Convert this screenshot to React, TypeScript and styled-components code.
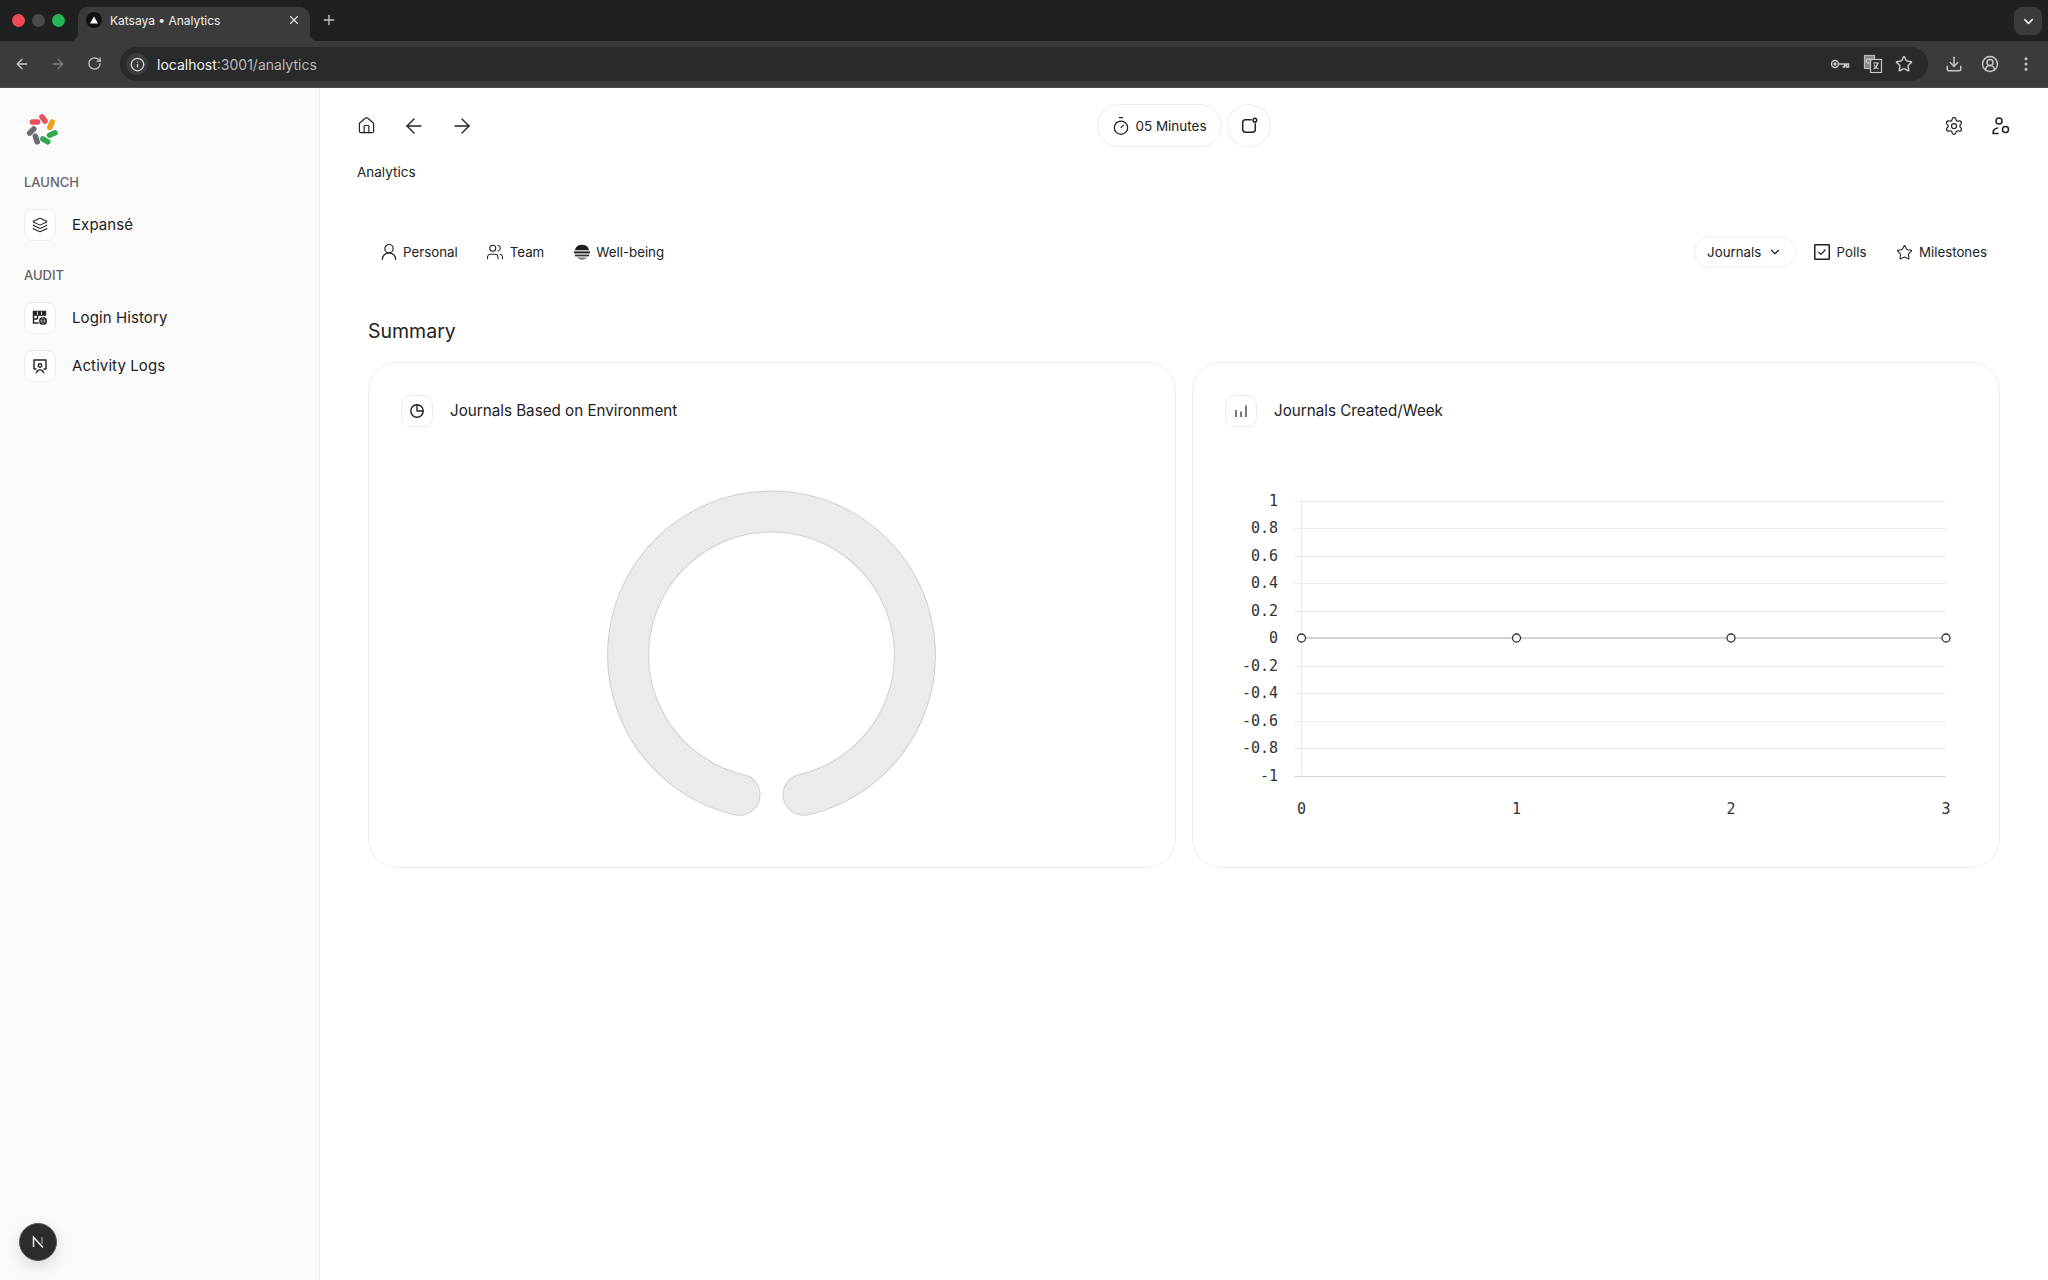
import React from "react";
import styled, { createGlobalStyle } from "styled-components";
import { ArrowLeft, ArrowRight, ChevronDown, House, Layers, Plus, RotateCw, Settings, Star, Timer, X, MoreVertical, Download, CircleUserRound, Info, Users, UserRound } from "lucide-react";

const Global = createGlobalStyle`
  html, body { margin: 0; padding: 0; background: #fff; overflow: hidden; }
  body { font-family: Inter, "Liberation Sans", sans-serif; color: #222; }
  * { box-sizing: border-box; }
`;

const Page = styled.div`display: flex; flex-direction: column; width: 2048px; height: 1280px; overflow: hidden;`;

const TabStrip = styled.div`display: flex; align-items: flex-end; height: 41px; background: #1f2120; padding-left: 12px;`;
const Lights = styled.div`display: flex; gap: 7px; align-self: flex-start; margin-top: 14px; width: 66px;`;
const Light = styled.span<{ $c: string }>`width: 13px; height: 13px; border-radius: 50%; background: ${p => p.$c};`;
const Tab = styled.div`
  position: relative; display: flex; align-items: center; width: 232px; height: 34px; padding: 0 9px 8px 8px;
  background: #3b3b3b; border-radius: 10px 10px 0 0; color: #f0f0f0; font-size: 12px;
  &::before, &::after { content: ""; position: absolute; bottom: 0; width: 8px; height: 8px; }
  &::before { left: -8px; background: radial-gradient(circle at 0 0, transparent 8px, #3b3b3b 8.5px); }
  &::after { right: -8px; background: radial-gradient(circle at 100% 0, transparent 8px, #3b3b3b 8.5px); }
`;
const Favicon = styled.span`
  display: flex; align-items: center; justify-content: center; width: 16px; height: 16px; border-radius: 50%;
  background: #111; margin-right: 8px;
`;
const TabTitle = styled.span`flex: 1;`;
const NewTab = styled.div`display: flex; align-self: flex-start; margin: 12px 0 0 11px; color: #c4c4c4;`;
const StripEnd = styled.div`
  margin-left: auto; margin-right: 6px; align-self: flex-start; margin-top: 7px; width: 28px; height: 28px; border-radius: 8px;
  background: #3b3b3b; display: flex; align-items: center; justify-content: center; color: #eee;
`;
const Toolbar = styled.div`display: flex; align-items: center; height: 47px; background: #3b3b3b; color: #c7c7c7; border-bottom: 1px solid #4a4a4a;`;
const NavIcon = styled.span<{ $dim?: boolean }>`display: flex; width: 36px; justify-content: center; color: ${p => (p.$dim ? "#7f7f7f" : "#c7c7c7")};`;
const NavGroup = styled.div`display: flex; padding-left: 4px; width: 120px;`;
const Omnibox = styled.div`
  display: flex; align-items: center; width: 1808px; height: 34px; border-radius: 17px; background: #292a2a; padding: 0 15px 0 6px;
  font-size: 14px; color: #b9b9b9;
`;
const InfoChip = styled.span`display: flex; align-items: center; justify-content: center; width: 22px; height: 22px; border-radius: 50%; background: #3b3b3b; margin-right: 9px; color: #ddd;`;
const Host = styled.span`color: #f2f2f2;`;
const OmniIcons = styled.div`margin-left: auto; display: flex; gap: 12.5px; color: #c7c7c7; align-items: center;`;
const TrailIcons = styled.div`display: flex; align-items: center; gap: 18px; margin-left: 17px; color: #c7c7c7;`;

const Body = styled.div`flex: 1; display: flex; min-height: 0;`;
const Sidebar = styled.aside`
  position: relative; width: 320px; background: #fafafa; border-right: 1px solid #ececec; padding: 24px 24px 0;
`;
const Logo = styled.div`display: flex; height: 34px; margin-left: 2px; margin-bottom: 26px;`;
const SectionLabel = styled.div`font-size: 13px; line-height: 20px; font-weight: 500; color: #666; margin-bottom: 17px;`;
const NavRow = styled.div`display: flex; align-items: center; gap: 16px; height: 31px; font-size: 15px; letter-spacing: .1px; color: #222; margin-bottom: 17px;`;
const NavBox = styled.span`
  display: flex; align-items: center; justify-content: center; width: 32px; height: 32px; border: 1px solid #ededed; border-radius: 9px; background: #fff; color: #222;
`;
const SectionGap = styled.div`height: 8px;`;
const DevBadge = styled.div`
  position: absolute; left: 19px; bottom: 19px; width: 38px; height: 38px; border-radius: 50%; background: #2c2c2c; border: 1px solid #555;
  display: flex; align-items: center; justify-content: center; box-shadow: 0 6px 16px rgba(0,0,0,.12);
`;

const Main = styled.main`flex: 1; padding: 16px 48px 0 48px; min-width: 0;`;
const Header = styled.div`display: grid; grid-template-columns: 1fr auto 1fr; align-items: center; height: 43px; margin: 0 -17px 0 -18px;`;
const IconGroup = styled.div<{ $end?: boolean }>`display: flex; gap: ${p => (p.$end ? "15px" : "16px")}; justify-content: ${p => (p.$end ? "flex-end" : "flex-start")};`;
const IconBtn = styled.span`display: flex; align-items: center; justify-content: center; width: 32px; height: 32px; color: #222;`;
const CenterGroup = styled.div`display: flex; gap: 5px;`;
const TimerPill = styled.div`
  display: flex; align-items: center; gap: 4px; height: 43px; width: 125px; justify-content: center; border: 1px solid #ececec; border-radius: 22px; font-size: 13.5px; color: #222;
`;
const RoundBtn = styled.div`display: flex; align-items: center; justify-content: center; width: 44px; height: 43px; border: 1px solid #ececec; border-radius: 50%; color: #222;`;
const Crumb = styled.div`font-size: 13.5px; line-height: 20px; color: #222; margin: 15px 0 54px -11px;`;
const TabsRow = styled.div`display: flex; justify-content: space-between; align-items: center; height: 32px; padding-right: 1px;`;
const TabGroup = styled.div<{ $gap: number }>`display: flex; align-items: center; gap: ${p => p.$gap}px;`;
const ViewTab = styled.div`display: flex; align-items: center; gap: 6px; padding: 0 12px; font-size: 13.3px; color: #222; height: 32px;`;
const IconSlot = styled.span`display: flex; justify-content: center; align-items: center; width: 17px; flex-shrink: 0; & > svg { flex-shrink: 0; }`;
const Select = styled.div`display: flex; align-items: center; gap: 7px; height: 32px; width: 103px; padding: 0 12px; margin-right: -1px; border: 1px solid #efefef; border-radius: 16px; font-size: 13.3px; color: #222; white-space: nowrap; & > svg { flex-shrink: 0; }`;
const SummaryTitle = styled.h2`font-size: 19.5px; line-height: 28px; font-weight: 400; color: #222; margin: 49px 0 17px;`;
const Cards = styled.div`display: grid; grid-template-columns: 1fr 1fr; gap: 16px;`;
const Card = styled.section`height: 506px; border: 1px solid #ececec; border-radius: 30px; padding: 32px; background: #fff;`;
const CardHead = styled.div`display: flex; align-items: center; gap: 17px; height: 31px; font-size: 15.2px; color: #222; margin-bottom: 59px;`;
const ChartBox = styled.div`display: flex; justify-content: center;`;

const s = { strokeLinecap: "round" as const, strokeLinejoin: "round" as const };

function LogoMark() {
  const bars: [number, number, number, number, string][] = [
    [6.5, 10, 11.5, 10, "#e8505b"], [16, 5, 19, 9, "#e8505b"], [26.2, 10, 23.8, 15.4, "#f59c1a"],
    [29, 20.8, 23.6, 23.2, "#2fa84f"], [16.8, 26.8, 21.8, 29.8, "#2fa84f"], [9.4, 24.2, 11.2, 29.8, "#6b6b70"], [7.8, 16.9, 3.6, 21.1, "#6b6b70"],
  ];
  return (
    <svg width="34" height="34" viewBox="0 0 34 34">
      {bars.map((b, i) => <line key={i} x1={b[0]} y1={b[1]} x2={b[2]} y2={b[3]} stroke={b[4]} strokeWidth="5.5" strokeLinecap="round" />)}
    </svg>
  );
}

const KeyIcon = () => (
  <svg width="20" height="20" viewBox="0 0 20 20" fill="none" stroke="currentColor" strokeWidth="1.5"><circle cx="5" cy="10" r="3.5" /><circle cx="5" cy="10" r="1" fill="currentColor" /><path d="M8.500 10h10v3h-2v-1.500h-2V13h-2" /></svg>
);
const TranslateIcon = () => (
  <svg width="20" height="20" viewBox="0 0 20 20" fill="none" stroke="currentColor" strokeWidth="1.2"><rect x="1.5" y="1.5" width="10" height="13" fill="#888" stroke="#bbb" /><rect x="7.5" y="5.5" width="11" height="13" fill="#292a2a" /><path d="M10 9h6M13 8v1M15 9c-.8 3-2.4 5-4.5 6M11 10.5c.8 2 2.5 3.6 4.5 4.5" /><circle cx="5.5" cy="7" r="2.2" /></svg>
);
const TableGlobeIcon = () => (
  <svg width="16" height="16" viewBox="0 0 16 16" fill="none"><path d="M1.5 1.5h12v3.5h-12zM1.5 5v8h5M5.5 1.5V9M9.5 1.5V6M1.5 9h4" stroke="#222" strokeWidth="1.4" /><path d="M1.5 1.5h12v3.5h-12z" fill="#222" /><path d="M5.5 1.5v3.5M9.5 1.5v3.5" stroke="#fff" strokeWidth=".8" /><circle cx="11" cy="11" r="4" fill="#222" /><path d="M7.5 11h7M11 7.5c-2 2-2 5 0 7M11 7.5c2 2 2 5 0 7" stroke="#fff" strokeWidth=".5" /></svg>
);
const PresenterIcon = () => (
  <svg width="16" height="16" viewBox="0 0 16 16" fill="none" stroke="#222" strokeWidth="1.4" {...s}><path d="M4 11H2V2h12v9h-2" /><circle cx="8" cy="7.5" r="1.7" /><path d="M4.5 14.5c.6-1.8 2-2.6 3.5-2.6s2.9.8 3.5 2.6" /></svg>
);
const PieIcon = () => (
  <svg width="16" height="16" viewBox="0 0 16 16" fill="none" stroke="#222" strokeWidth="1.4" {...s}><circle cx="8" cy="8" r="6.2" /><path d="M8 1.8V8h6.2" /></svg>
);
const BarsIcon = () => (
  <svg width="16" height="16" viewBox="0 0 16 16" fill="none" stroke="#222" strokeWidth="1.2"><path d="M3 7v7M8 8.5V14M13 2.5V14" /></svg>
);
const DotSquareIcon = () => (
  <svg width="18" height="18" viewBox="0 0 20 20" fill="none" stroke="#222" strokeWidth="1.7"><path d="M13 3H6a3 3 0 0 0-3 3v8a3 3 0 0 0 3 3h8a3 3 0 0 0 3-3V7" /><circle cx="16.5" cy="3.5" r="2" /></svg>
);
const UserCogIcon = () => (
  <svg width="20" height="20" viewBox="0 0 20 20" fill="none" stroke="#222" strokeWidth="1.5" {...s}><circle cx="8" cy="5" r="3" /><path d="M2 17.5c0-3 1.500-5 4.500-5.500M2 17.500h5" /><circle cx="14.5" cy="13.500" r="3" /></svg>
);
const SunsetIcon = () => (
  <svg width="18" height="18" viewBox="0 0 18 18"><path d="M1.800 7.200A7.500 7.500 0 0 1 16.200 7.200z" fill="#1f1f1f" /><path d="M1 8.400h16v2H1z" fill="#1f1f1f" /><path d="M2 11.600h14v1.800H2z" fill="#333" /><path d="M4 14.600h10c-1.200 1.300-3 2.200-5 2.200s-3.800-.9-5-2.200z" fill="#777" /></svg>
);
const CheckBoxIcon = () => (
  <svg width="16" height="16" viewBox="0 0 16 16" fill="none" stroke="#222"><rect x=".75" y=".75" width="14.5" height="14.5" strokeWidth="1.5" rx=".5" /><path d="M4.500 8l2.500 2.500 4.500-5" strokeWidth="1.200" /></svg>
);

const yTicks = ["1", "0.8", "0.6", "0.4", "0.2", "0", "-0.2", "-0.4", "-0.6", "-0.8", "-1"];
const xs = [76.5, 291.5, 506, 721];

function LineChart() {
  return (
    <svg width="742" height="340" viewBox="0 0 742 340" fontFamily='"DejaVu Sans Mono", monospace' fontSize="15" fill="#333">
      <line x1="76.500" y1="15" x2="76.500" y2="290" stroke="#ebebeb" />
      {yTicks.map((t, i) => {
        const y = Math.round(15.5 + i * 27.5) + 0.5;
        return (
          <g key={t}>
            <line x1="69" y1={y} x2="721" y2={y} stroke={i === 10 ? "#d4d4d4" : "#ebebeb"} />
            <text x="53" y={y - 1} textAnchor="end" dominantBaseline="central">{t}</text>
          </g>
        );
      })}
      <line x1="76.500" y1="153" x2="721" y2="153" stroke="#d2d2d2" strokeWidth="2" />
      {xs.map((x, i) => (
        <g key={x}>
          <circle cx={x} cy="153" r="4" fill="#fff" stroke="#333" strokeWidth="1.300" />
          <text x={x} y="324" textAnchor="middle" dominantBaseline="central">{i}</text>
        </g>
      ))}
    </svg>
  );
}

function Donut() {
  const d = "M138 309.7 A143.4 143.4 0 1 1 202 309.7";
  return (
    <svg width="340" height="340" viewBox="0.5 0 340 340" fill="none" strokeLinecap="round">
      <path d={d} stroke="#cfcfcf" strokeWidth="42" />
      <path d={d} stroke="#ebebeb" strokeWidth="40" />
    </svg>
  );
}

export default function App() {
  return (
    <Page>
      <Global />
      <TabStrip>
        <Lights>
          <Light $c="#ef4a55" /><Light $c="#4a4a4a" /><Light $c="#27b455" />
        </Lights>
        <Tab>
          <Favicon><svg width="8" height="8" viewBox="0 0 8 8"><path d="M4 .5 8 7.500H0z" fill="#fff" /></svg></Favicon>
          <TabTitle>Katsaya • Analytics</TabTitle>
          <X size={14} color="#ddd" />
        </Tab>
        <NewTab><Plus size={16} /></NewTab>
        <StripEnd><ChevronDown size={15} strokeWidth={2.500} /></StripEnd>
      </TabStrip>
      <Toolbar>
        <NavGroup>
          <NavIcon><ArrowLeft size={16} /></NavIcon>
          <NavIcon $dim><ArrowRight size={16} /></NavIcon>
          <NavIcon><RotateCw size={15} /></NavIcon>
        </NavGroup>
        <Omnibox>
          <InfoChip><Info size={15} /></InfoChip>
          <Host>localhost</Host>:3001/analytics
          <OmniIcons>
            <KeyIcon /><TranslateIcon /><Star size={18} />
          </OmniIcons>
        </Omnibox>
        <TrailIcons>
          <Download size={18} /><CircleUserRound size={18} /><MoreVertical size={18} />
        </TrailIcons>
      </Toolbar>
      <Body>
        <Sidebar>
          <Logo><LogoMark /></Logo>
          <SectionLabel>LAUNCH</SectionLabel>
          <NavRow><NavBox><Layers size={16} strokeWidth={1.600} /></NavBox>Expansé</NavRow>
          <SectionGap />
          <SectionLabel>AUDIT</SectionLabel>
          <NavRow><NavBox><TableGlobeIcon /></NavBox>Login History</NavRow>
          <NavRow><NavBox><PresenterIcon /></NavBox>Activity Logs</NavRow>
          <DevBadge>
            <svg width="16" height="16" viewBox="0 0 16 16" fill="none" stroke="#eee" strokeWidth="1.500"><path d="M3.500 13V3.200L13 13.500" /><path d="M12 3v7" stroke="#888" /></svg>
          </DevBadge>
        </Sidebar>
        <Main>
          <Header>
            <IconGroup>
              <IconBtn><House size={19} strokeWidth={1.500} /></IconBtn>
              <IconBtn><ArrowLeft size={24} strokeWidth={1.400} /></IconBtn>
              <IconBtn><ArrowRight size={24} strokeWidth={1.400} /></IconBtn>
            </IconGroup>
            <CenterGroup>
              <TimerPill><Timer size={20} strokeWidth={1.500} />05 Minutes</TimerPill>
              <RoundBtn><DotSquareIcon /></RoundBtn>
            </CenterGroup>
            <IconGroup $end>
              <IconBtn><Settings size={20} strokeWidth={1.500} /></IconBtn>
              <IconBtn><UserCogIcon /></IconBtn>
            </IconGroup>
          </Header>
          <Crumb>Analytics</Crumb>
          <TabsRow>
            <TabGroup $gap={5}>
              <ViewTab><IconSlot><UserRound size={20} strokeWidth={1.400} /></IconSlot>Personal</ViewTab>
              <ViewTab><IconSlot><Users size={18} strokeWidth={1.400} /></IconSlot>Team</ViewTab>
              <ViewTab><IconSlot><SunsetIcon /></IconSlot>Well-being</ViewTab>
            </TabGroup>
            <TabGroup $gap={5.5}>
              <Select>Journals<ChevronDown size={14} strokeWidth={2} /></Select>
              <ViewTab><IconSlot><CheckBoxIcon /></IconSlot>Polls</ViewTab>
              <ViewTab><IconSlot><Star size={17} strokeWidth={1.500} /></IconSlot>Milestones</ViewTab>
            </TabGroup>
          </TabsRow>
          <SummaryTitle>Summary</SummaryTitle>
          <Cards>
            <Card>
              <CardHead><NavBox><PieIcon /></NavBox>Journals Based on Environment</CardHead>
              <ChartBox><Donut /></ChartBox>
            </Card>
            <Card>
              <CardHead><NavBox><BarsIcon /></NavBox>Journals Created/Week</CardHead>
              <ChartBox><LineChart /></ChartBox>
            </Card>
          </Cards>
        </Main>
      </Body>
    </Page>
  );
}
